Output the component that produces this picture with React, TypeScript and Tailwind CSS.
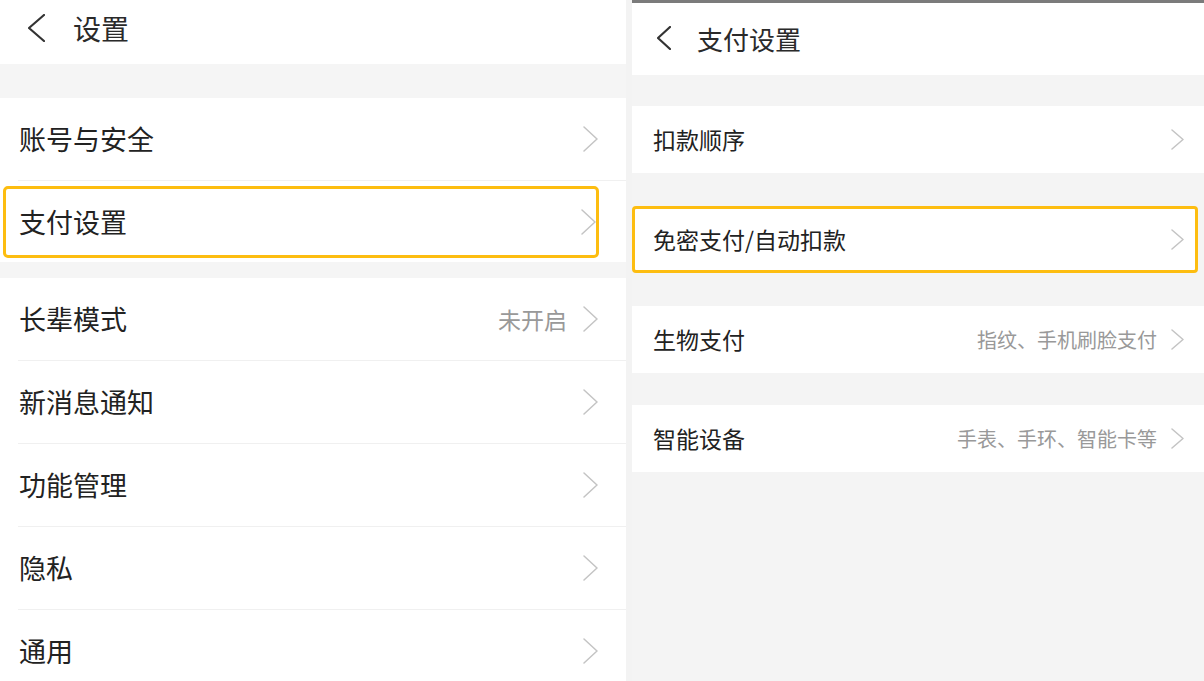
import React from "react";

const font = { fontFamily: '"Noto Sans CJK SC", "Noto Sans", sans-serif' };

const Chevron = ({ w, h, color = "#c4c4c4", sw = 1.5 }: { w: number; h: number; color?: string; sw?: number }) => (
  <svg width={w} height={h} viewBox={`0 0 ${w} ${h}`} fill="none">
    <path d={`M1 1 L${w - 1} ${h / 2} L1 ${h - 1}`} stroke={color} strokeWidth={sw} strokeLinecap="round" strokeLinejoin="round" />
  </svg>
);

const BackArrow = ({ w, h }: { w: number; h: number }) => (
  <svg width={w} height={h} viewBox={`0 0 ${w} ${h}`} fill="none">
    <path d={`M${w - 1} 1 L1 ${h / 2} L${w - 1} ${h - 1}`} stroke="#333" strokeWidth={2.2} strokeLinecap="round" strokeLinejoin="round" />
  </svg>
);

const Divider = () => <div className="ml-[18px] h-px shrink-0 bg-[#f0f0f0]" />;

const LeftRow = ({ label, value }: { label: string; value?: string }) => (
  <div className="flex h-[82px] shrink-0 items-center pl-[19px] pr-[28px]">
    <span className="flex-1 pt-[1px] text-[27px] text-[#222]">{label}</span>
    {value && <span className="mr-[16px] pt-[1px] text-[23px] text-[#999]">{value}</span>}
    <Chevron w={15} h={26} />
  </div>
);

const RightRow = ({ label, value }: { label: string; value?: string }) => (
  <div className="flex h-[67px] shrink-0 items-center bg-white pl-[21px] pr-[20px]">
    <span className="flex-1 text-[23px] text-[#222]">{label}</span>
    {value && <span className="mr-[14px] text-[20px] text-[#999]">{value}</span>}
    <Chevron w={13} h={21} />
  </div>
);

export default function App() {
  return (
    <div className="flex h-[681px] w-[1204px] overflow-hidden bg-white" style={font}>
      {/* left panel */}
      <div className="flex w-[626px] shrink-0 flex-col bg-white">
        <div className="flex h-[64px] shrink-0 items-center pb-[9px] pl-[28px]">
          <BackArrow w={17} h={28} />
          <span className="ml-[28px] text-[28px] text-[#2a2a2a]">设置</span>
        </div>
        <div className="h-[34px] shrink-0 bg-[#f5f5f5]" />
        <LeftRow label="账号与安全" />
        <Divider />
        <div className="flex h-[81px] shrink-0 flex-col pt-[5px]">
          <div className="ml-[3px] mr-[27px] flex h-[72px] items-center rounded-[5px] border-[3px] border-[#fdbd10] pl-[13px]">
            <span className="flex-1 pt-[1px] text-[27px] text-[#222]">支付设置</span>
            <Chevron w={15} h={26} />
          </div>
        </div>
        <div className="h-[16px] shrink-0 bg-[#f5f5f5]" />
        <LeftRow label="长辈模式" value="未开启" />
        <Divider />
        <LeftRow label="新消息通知" />
        <Divider />
        <LeftRow label="功能管理" />
        <Divider />
        <LeftRow label="隐私" />
        <Divider />
        <LeftRow label="通用" />
      </div>

      <div className="w-[6px] shrink-0 bg-[#f3f3f3]" />

      {/* right panel */}
      <div className="flex flex-1 flex-col bg-[#f4f4f4]">
        <div className="h-[3px] shrink-0 bg-[#7b7b7b]" />
        <div className="flex h-[72px] shrink-0 items-center bg-white pb-[2px] pl-[25px]">
          <BackArrow w={14} h={24} />
          <span className="ml-[26px] text-[26px] text-[#2a2a2a]">支付设置</span>
        </div>
        <div className="h-[31px] shrink-0" />
        <RightRow label="扣款顺序" />
        <div className="h-[33px] shrink-0" />
        <div className="mr-[6px] flex h-[67px] shrink-0 items-center rounded-[4px] border-[3px] border-[#fdbd10] bg-white pl-[18px] pr-[11px]">
          <span className="flex-1 text-[23px] text-[#222]">免密支付/自动扣款</span>
          <Chevron w={13} h={21} />
        </div>
        <div className="h-[33px] shrink-0" />
        <RightRow label="生物支付" value="指纹、手机刷脸支付" />
        <div className="h-[32px] shrink-0" />
        <RightRow label="智能设备" value="手表、手环、智能卡等" />
      </div>
    </div>
  );
}
